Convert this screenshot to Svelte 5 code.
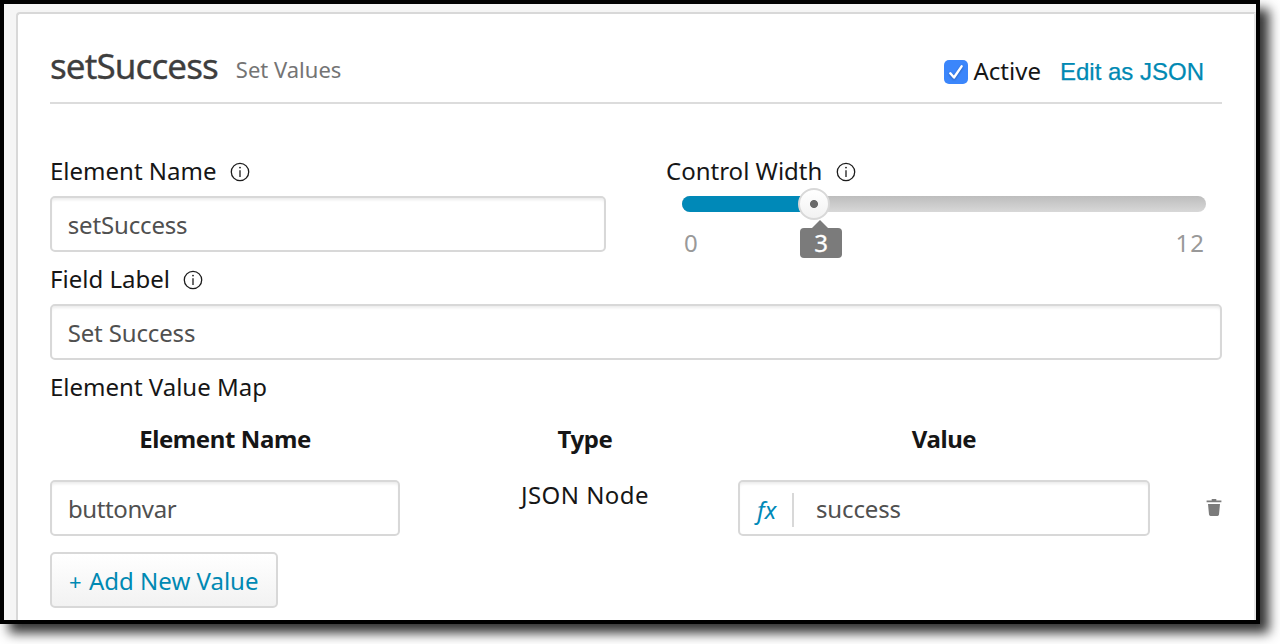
<script lang="ts">
  let elementName = $state('setSuccess');
  let fieldLabel = $state('Set Success');
  let width = $state(3);
  let active = $state(true);
  let rows = $state([{ name: 'buttonvar', type: 'JSON Node', value: 'success' }]);
  const max = 12;
</script>

{#snippet info()}
  <svg class="info" width="20" height="20" viewBox="0 0 20 20" fill="none" aria-hidden="true">
    <circle cx="10" cy="10" r="8.7" stroke="#1c1c1c" stroke-width="1.3" />
    <path d="M10 8.2V15" stroke="#1c1c1c" stroke-width="1.3" />
    <circle cx="10" cy="5.6" r=".9" fill="#1c1c1c" />
  </svg>
{/snippet}

<div class="page">
<div class="frame">
  <section class="card">
    <header>
      <h1>{elementName}</h1>
      <span class="kind">Set Values</span>
      <button class="check" aria-label="Active" aria-pressed={active} onclick={() => (active = !active)}>
        <svg width="24" height="24" viewBox="0 0 24 24" fill="none">
          <path d="M6.3 13.3L10 17.5L17.6 6.3" stroke="#fff" stroke-width="2.4" stroke-linecap="round" stroke-linejoin="round" />
        </svg>
      </button>
      <span class="active">Active</span>
      <a href="#json">Edit as JSON</a>
    </header>

    <div class="top">
      <div>
        <div class="label"><span>Element Name</span>{@render info()}</div>
        <div class="input"><span class="tight">{elementName}</span></div>
      </div>
      <div>
        <div class="label"><span>Control Width</span>{@render info()}</div>
        <div class="slider">
          <div class="fill" style="width: {(width / max) * 100}%"></div>
          <div class="thumb" style="left: {(width / max) * 100}%"></div>
          <div class="tip" style="left: {(width / max) * 100}%">{width}</div>
        </div>
        <div class="scale"><span>0</span><span class="max">{max}</span></div>
      </div>
    </div>

    <div class="label"><span>Field Label</span>{@render info()}</div>
    <div class="input"><span class="tight">{fieldLabel}</span></div>

    <div class="label"><span>Element Value Map</span></div>
    <div class="grid head">
      <div>Element Name</div>
      <div class="type">Type</div>
      <div>Value</div>
    </div>
    {#each rows as row}
      <div class="grid">
        <div class="input low"><span class="tighter">{row.name}</span></div>
        <div class="type"><span class="wide">{row.type}</span></div>
        <div class="input fx"><i>fx</i><b></b><span class="tight">{row.value}</span></div>
        <svg class="trash" width="16" height="18" viewBox="0 0 16 18" fill="#7b7b7b" aria-hidden="true">
          <path d="M5.7 0h4.6v1.500H15.400v1.700H.6V1.500h5.100zM2 5h12l-1 10.600q-.2 1.400-1.500 1.400h-7Q3.200 17 3 15.600z" />
        </svg>
      </div>
    {/each}
    <button class="add"><span class="plus">+</span><span>Add New Value</span></button>
  </section>
</div>
</div>

<style>
  :global(body) { background: #fff; }
  * { box-sizing: border-box; }
  .page { height: 644px; overflow: hidden; }
  .frame {
    width: 1260px; height: 624px; border: 4px solid #000; background: #f5f5f5;
    padding: 8px 0 0 12px; overflow: hidden;
    box-shadow: 9px 9px 11px rgba(0, 0, 0, .8);
    font: 24px/36px "Noto Sans", sans-serif; color: #161616;
  }
  .card {
    height: 640px; background: #fff; border: 2px solid #d8d8d8; border-right-color: #e6e6e6;
    border-radius: 4px 0 0 0; padding: 0 32px;
  }
  span { white-space: nowrap; }
  .tight { letter-spacing: -.15px; }
  .tighter { letter-spacing: -.4px; }
  .wide { letter-spacing: .45px; }
  header { height: 90px; border-bottom: 2px solid #dcdcdc; display: flex; align-items: baseline; padding: 28px 18px 0 0; }
  h1 { margin: 0; font-size: 35px; line-height: 48px; font-weight: 400; color: #3e3e3e; letter-spacing: -.9px; -webkit-text-stroke: .3px #3e3e3e; }
  .kind { margin-left: 18px; font-size: 22px; color: #747474; margin-right: auto; position: relative; top: -1px; }
  .check { width: 24px; height: 24px; border: 0; padding: 0; border-radius: 5px; background: #3b86fb; align-self: flex-start; margin: 18px 6px 0 0; }
  .check svg { display: block; filter: drop-shadow(0 1px 1px rgba(0, 0, 0, .3)); }
  .active, a { position: relative; top: 1px; }
  a { font-family: "Liberation Sans", sans-serif; color: #0089b3; text-decoration: none; margin-left: 19px; -webkit-text-stroke: .25px #0089b3; }
  .top { display: grid; grid-template-columns: 556px 556px; gap: 60px; height: 148px; padding-top: 40px; }
  .label { height: 52px; padding-top: 2px; display: flex; align-items: center; }
  .info { margin: 2px 0 0 13.500px; }
  .input {
    height: 56px; border: 2px solid #d8d8d8; border-radius: 5px; background: #fff;
    box-shadow: inset 0 3px 3px -1px rgba(0, 0, 0, .08);
    display: flex; align-items: center; padding: 1px 15.700px 0; color: #505050;
  }
  .input.low { padding: 2px 16px 0; }
  .slider { position: relative; height: 16px; margin: 0 16px; border-radius: 8px; background: linear-gradient(#bdbdbd, #d8d8d8); }
  .fill { height: 16px; border-radius: 8px 0 0 8px; background: #0089b8; }
  .thumb {
    position: absolute; top: -8px; width: 32px; height: 32px; margin-left: -15px; border-radius: 50%;
    border: 2px solid #d8d8d8; background: radial-gradient(circle, #6b6b6b 3.6px, transparent 4.4px), linear-gradient(#fff, #f2f2f2);
  }
  .tip {
    position: absolute; top: 32px; width: 42px; height: 30px; margin-left: -13px; border-radius: 4px;
    background: #7b7b7b; color: #fff; text-align: center; line-height: 30px; -webkit-text-stroke: .3px #fff;
  }
  .tip::before { content: ""; position: absolute; left: 12px; top: -8px; border: 8px solid transparent; border-top: 0; border-bottom-color: #7b7b7b; }
  .scale { display: flex; justify-content: space-between; margin: 13px 17px 0 18px; color: #999; }
  .max { letter-spacing: 1px; }
  .grid { display: grid; grid-template-columns: 350px 338px 412px 72px; }
  .head { height: 68px; padding-top: 9px; font-weight: 700; text-align: center; letter-spacing: -.4px; }
  .type { padding-left: 32px; text-align: center; line-height: 30px; }
  .head .type { line-height: inherit; }
  .fx { padding-left: 17px; }
  .fx i { color: #0089b8; width: 22px; margin-top: 2px; }
  .fx b { width: 2px; height: 34px; background: #d8d8d8; margin: 2px 22px 0 13px; }
  .trash { justify-self: end; margin-top: 19px; }
  .add {
    margin-top: 16px; width: 228px; height: 56px; border: 2px solid #d8d8d8; border-radius: 5px;
    background: linear-gradient(#fff, #f2f2f2); color: #0089b3; font: inherit; display: flex; align-items: center; padding: 2px 17px 0;
  }
  .plus { font-size: 22px; width: 20px; text-align: left; }
</style>
